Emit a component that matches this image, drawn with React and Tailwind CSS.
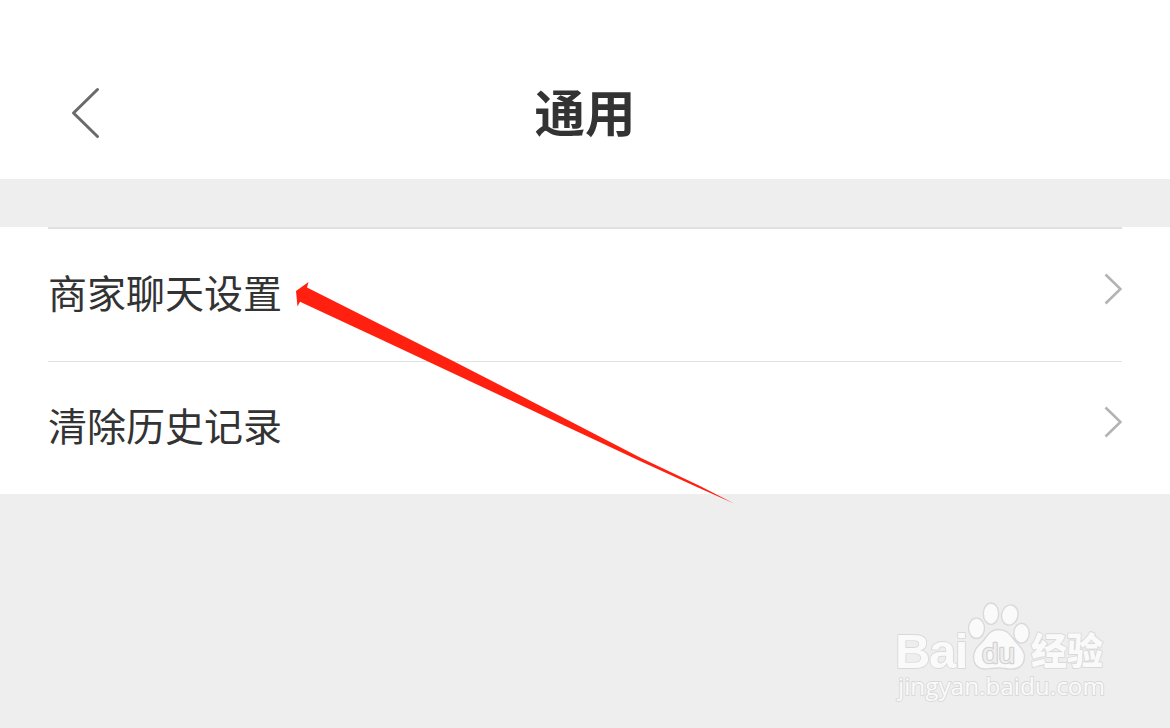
import React from "react";

const rows = [
  { id: "chat", label: "商家聊天设置" },
  { id: "history", label: "清除历史记录" },
];

const BackIcon = () => (
  <svg className="w-[30px] h-[54px]" viewBox="0 0 30 54" fill="none" stroke="#6a6a6a" strokeWidth="3" strokeLinecap="round" strokeLinejoin="round">
    <path d="M27.5 3.5L3.5 27l24 23.5" />
  </svg>
);

const ArrowIcon = () => (
  <svg className="w-[18px] h-[32px]" viewBox="0 0 18 32" fill="none" stroke="#b3b3b3" strokeWidth="2.6">
    <path d="M1.5 1.5L16.5 16 1.5 30.5" />
  </svg>
);

const Pointer = () => (
  <svg className="absolute left-[290px] top-[276px] w-[450px] h-[232px] pointer-events-none" viewBox="290 276 450 232">
    <path d="M296 291L308.5 282 307 287.5 380 324.3 455 362 560 416 640 457.5 700 486 734 503.5 698 487.5 640 461 560 423.5 380 339 300 301.8 297.5 306.5Z" fill="#ff2010" />
  </svg>
);

const Watermark = () => (
  <svg
    className="absolute left-[888px] top-[596px] w-[230px] h-[112px] pointer-events-none"
    viewBox="888 596 230 112"
    fill="#fafafa"
    stroke="#d9d9d9"
    strokeWidth="1.8"
    strokeLinejoin="round"
  >
    <text x="895" y="667.5" fontSize="49" fontWeight="700" letterSpacing="-1.5" paintOrder="stroke" className="font-['Liberation_Sans',sans-serif]">Bai</text>

    {/* Paw */}
    <g strokeWidth="1.4">
      <ellipse cx="976.5" cy="628.3" rx="8" ry="10.2" />
      <ellipse cx="991" cy="613.7" rx="7.7" ry="10.7" />
      <ellipse cx="1009.8" cy="615" rx="8.2" ry="10.2" transform="rotate(12 1009.8 615)" />
      <ellipse cx="1021.5" cy="633.2" rx="7.7" ry="10" />
      <path d="M998 629.5C990 629.5 987 636 983 641C978 646 973.5 650 973.5 657C973.5 665 979 669.5 986 669C991 668.5 994 668 999 668C1004 668 1007 669.5 1013 669C1020 668.5 1024.5 664 1024.5 656C1024.5 649 1018 645 1013.5 639C1009 633 1006 629.5 998 629.5Z" />
    </g>
    <text x="982" y="662.5" fontSize="28" fontWeight="400" textLength="33" lengthAdjust="spacingAndGlyphs" fill="#eeeeee" stroke="#d2d2d2" strokeWidth="2.4" paintOrder="stroke" className="font-['Liberation_Sans',sans-serif]">du</text>

    <text x="1031" y="665" fontSize="37" fontWeight="900" textLength="72" lengthAdjust="spacingAndGlyphs" paintOrder="stroke" className="font-['Noto_Sans_CJK_SC',sans-serif]">经验</text>
    <text x="898" y="695" fontSize="24" textLength="207" lengthAdjust="spacingAndGlyphs" paintOrder="stroke" className="font-['Open_Sans',sans-serif]">jingyan.baidu.com</text>
  </svg>
);

const App = () => {
  return (
    <div className="relative w-[1170px] h-[728px] overflow-hidden bg-[#eeeeee] text-[#333333] font-['Noto_Sans_CJK_SC',sans-serif]">
      {/* Header */}
      <header className="grid grid-cols-[1fr_auto_1fr] items-center h-[179px] pt-[47px] bg-white px-[70px]">
        <button type="button" className="justify-self-start" aria-label="返回">
          <BackIcon />
        </button>
        <h1 className="pb-[6px] text-[50.5px] leading-[60px] font-bold">通用</h1>
      </header>

      {/* Settings list */}
      <main className="mt-12 bg-white px-12">
        {rows.map((row, i) => (
          <button
            key={row.id}
            type="button"
            className={`flex w-full items-center justify-between text-left ${
              i === 0 ? "h-[134px] border-t-2 border-[#e0e0e0]" : "h-[133px] border-t border-[#e2e2e2]"
            }`}
          >
            <span className="pb-[9px] text-[39px] leading-[58px]">{row.label}</span>
            <span className="pb-[13px]">
              <ArrowIcon />
            </span>
          </button>
        ))}
      </main>

      <Pointer />
      <Watermark />
    </div>
  );
};

export default App;
